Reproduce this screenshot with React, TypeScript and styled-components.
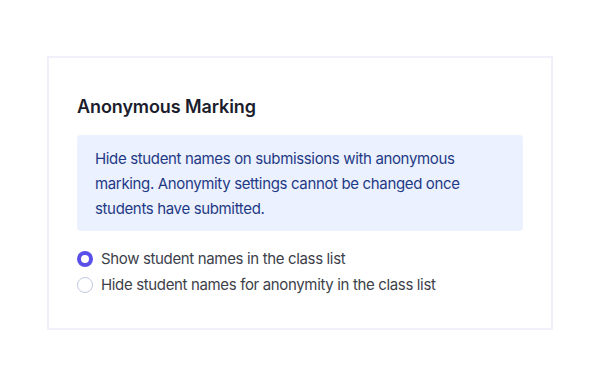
import { useState } from 'react';
import styled, { createGlobalStyle } from 'styled-components';

const GlobalStyle = createGlobalStyle`
  html, body {
    margin: 0;
    padding: 0;
    background: #ffffff;
  }
  body {
    font-family: Inter, 'Noto Sans', sans-serif;
    -webkit-font-smoothing: antialiased;
  }
`;

const Page = styled.main`
  padding: 56px 54px 53px 47px;
`;

const Card = styled.section`
  border: 2px solid #f0f0fa;
  padding: 29px 28px 31px 28px;
`;

const Title = styled.h2`
  margin: 8px 0 16px 0;
  font-size: 18px;
  line-height: 24px;
  font-weight: 600;
  letter-spacing: -0.1px;
  color: #1b1d2c;
`;

const Notice = styled.div`
  background: #ebf1ff;
  border-radius: 4px;
  padding: 11px 18px 10px 18px;
  font-size: 15px;
  line-height: 25px;
  letter-spacing: -0.35px;
  color: #1f3a85;
`;

const Options = styled.div`
  display: flex;
  flex-direction: column;
  gap: 2px;
  margin-top: 16px;
`;

const Option = styled.label`
  display: flex;
  align-items: center;
  gap: 8px;
  font-size: 15px;
  line-height: 24px;
  letter-spacing: -0.35px;
  color: #3d3f4a;
  cursor: pointer;
`;

const Dot = styled.span<{ $checked: boolean }>`
  box-sizing: border-box;
  width: 16px;
  height: 16px;
  border-radius: 50%;
  flex-shrink: 0;
  border: ${(p) => (p.$checked ? '4.5px solid #5b4fe9' : '1px solid #c3c8de')};
  background: #ffffff;
`;

const options = [
  'Show student names in the class list',
  'Hide student names for anonymity in the class list',
];

export default function App() {
  const [selected, setSelected] = useState(0);

  return (
    <Page>
      <GlobalStyle />
      <Card>
        <Title>Anonymous Marking</Title>
        <Notice>
          Hide student names on submissions with anonymous marking. Anonymity
          settings cannot be changed once students have submitted.
        </Notice>
        <Options>
          {options.map((label, i) => (
            <Option key={i} onClick={() => setSelected(i)}>
              <Dot $checked={selected === i} />
              {label}
            </Option>
          ))}
        </Options>
      </Card>
    </Page>
  );
}
